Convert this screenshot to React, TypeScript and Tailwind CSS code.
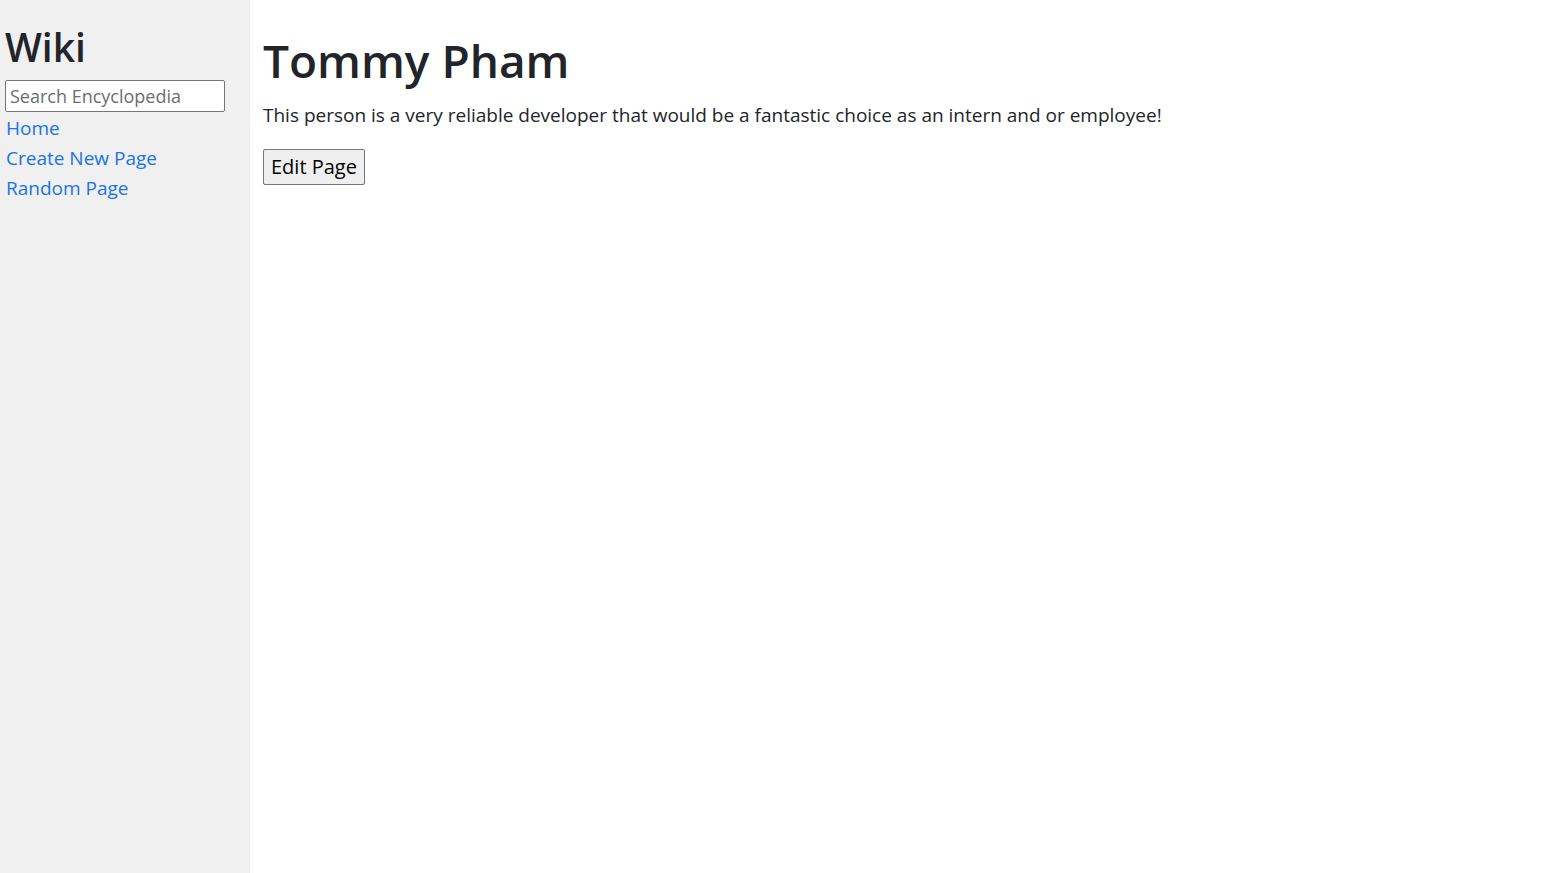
export default function App() {
  return (
    <div className="flex min-h-screen font-['Open_Sans',sans-serif] text-[#212529]">
      {/* Sidebar */}
      <div className="w-[250px] shrink-0 bg-[#f0f0f0] px-[5px] pt-[24px]">
        <h2 className="text-[39px] font-semibold leading-[1.2] mb-[9px]">Wiki</h2>
        <input
          type="text"
          placeholder="Search Encyclopedia"
          className="block w-[220px] h-[32px] border border-[#767676] rounded-[2px] bg-white px-[4px] text-[18px] placeholder:text-[#6d6d6d] outline-none"
        />
        <div className="flex flex-col pt-[1px]">
          <a href="#" className="text-[19px] leading-[30px] text-[#1a73e8] px-[1px]">Home</a>
          <a href="#" className="text-[19px] leading-[30px] text-[#1a73e8] px-[1px]">Create New Page</a>
          <a href="#" className="text-[19px] leading-[30px] text-[#1a73e8] px-[1px]">Random Page</a>
        </div>
      </div>

      {/* Main */}
      <div className="flex-1 px-[13px] pt-[33px]">
        <h1 className="text-[46px] font-semibold leading-[55px] mb-[12px]">Tommy Pham</h1>
        <p className="text-[19px] leading-[30px] mb-[19px]">
          This person is a very reliable developer that would be a fantastic choice as an intern and or employee!
        </p>
        <button className="h-[36px] px-[7px] border border-[#767676] rounded-[2px] bg-[#efefef] text-[20px] text-black">
          Edit Page
        </button>
      </div>
    </div>
  )
}
